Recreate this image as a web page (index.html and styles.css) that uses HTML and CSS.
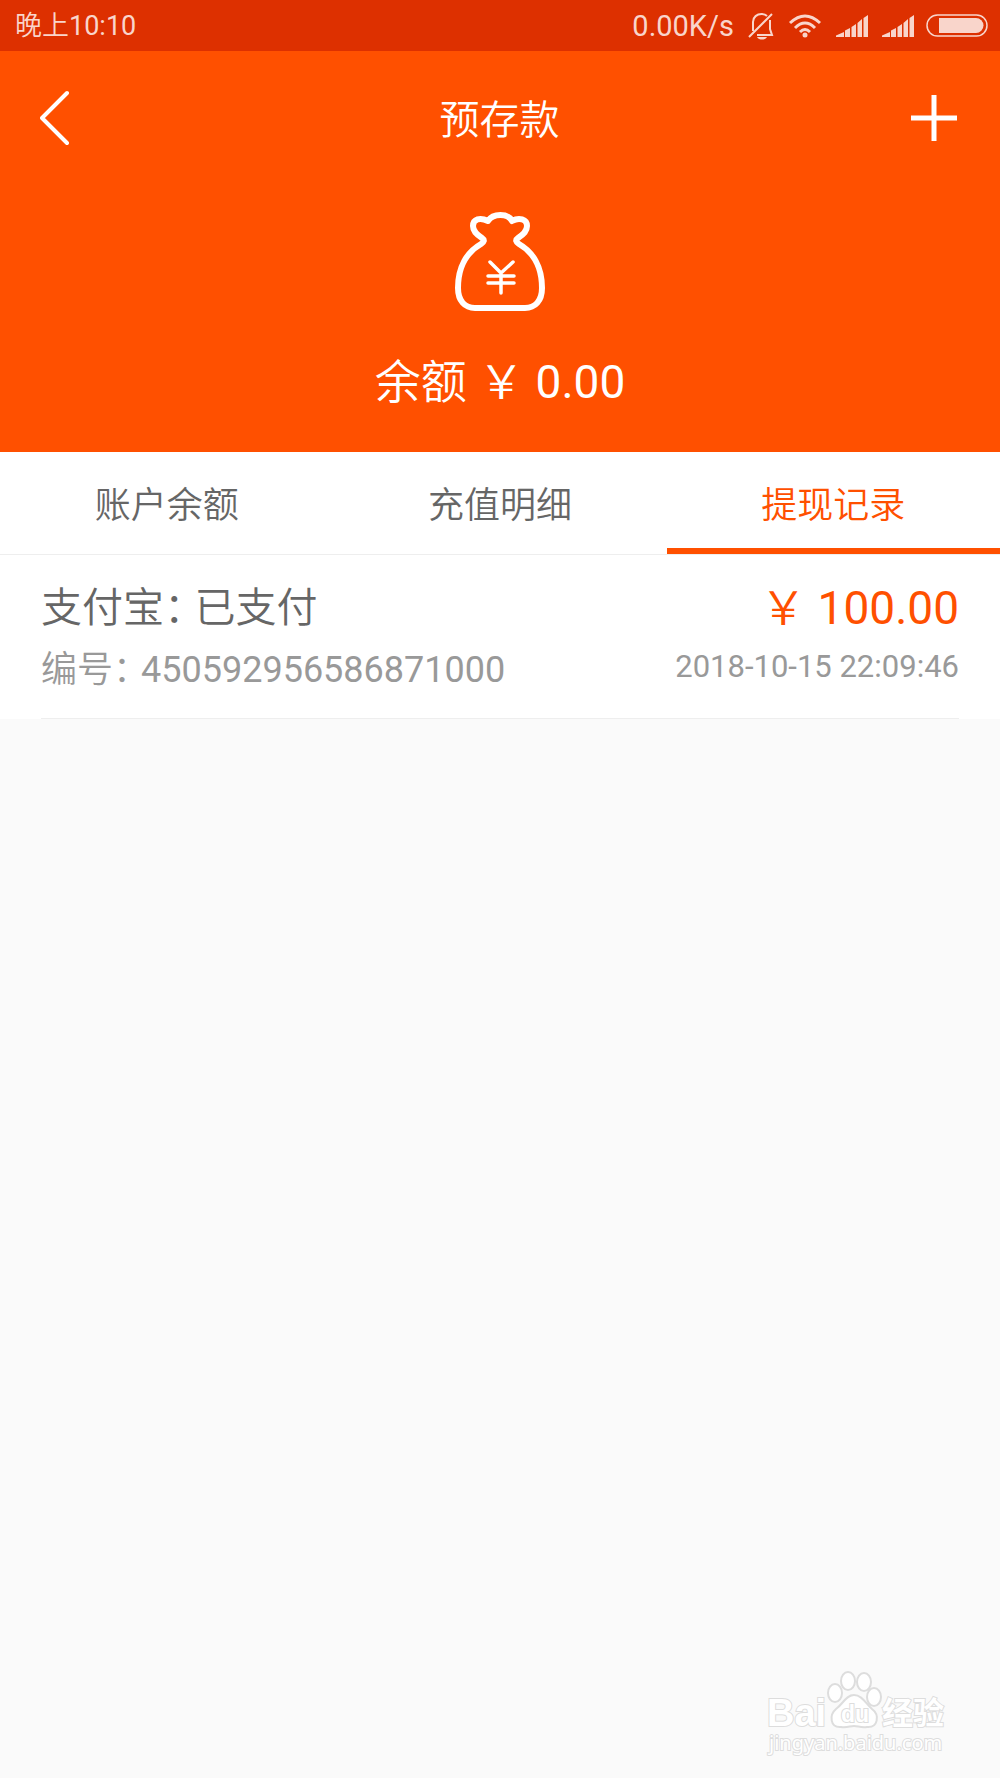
FILE: index.html
```html
<!DOCTYPE html>
<html lang="zh-CN">
<head>
  <meta charset="utf-8">
  <meta name="viewport" content="width=device-width, initial-scale=1">
  <title>预存款</title>
  <link rel="stylesheet" href="styles.css">
</head>
<body>
  <div class="status-bar">
    <time class="clock">晚上10:10</time>
    <div class="status-icons">
      <span class="rate">0.00K/s</span>
      <svg class="bell" width="26" height="28" viewBox="0 0 26 28" fill="none" stroke="currentColor" stroke-width="2">
        <path d="M1 25 24 2M5 19V10C5 5 9 2 13.500 2C16 2 18 3 19 4M22 8V17L24 23H9"/>
        <path d="M9 25H19C18 27 16 27.500 14 27.500S10 27 9 25Z" fill="currentColor" stroke="none"/>
      </svg>
      <svg class="wifi" width="34" height="24" viewBox="0 0 34 24" fill="none" stroke="currentColor" stroke-width="3">
        <path d="M2 9Q17-5 32 9M7 14Q17 4 27 14M12 18Q17 13 22 18"/>
        <circle cx="17" cy="21" r="2.500" fill="currentColor" stroke="none"/>
      </svg>
      <svg class="signal" width="32" height="22" viewBox="0 0 32 22" fill="currentColor">
        <path d="M0 22V20.500L8 17V22ZM9 22V15.500L14 13V22ZM15.500 22V12L20 9V22ZM21.500 22V8L26 4V22ZM27.500 22V3L32 0V22Z"/>
      </svg>
      <svg class="signal" width="32" height="22" viewBox="0 0 32 22" fill="currentColor">
        <path d="M0 22V20.500L8 17V22ZM9 22V15.500L14 13V22ZM15.500 22V12L20 9V22ZM21.500 22V8L26 4V22ZM27.500 22V3L32 0V22Z"/>
      </svg>
      <svg class="battery" width="62" height="24" viewBox="0 0 62 24">
        <rect x="1" y="1" width="60" height="21" rx="10.500" fill="none" stroke="currentColor" stroke-width="1.500"/>
        <path d="M13 4H50A7.500 7.500 0 0 1 50 19H13Z" fill="currentColor"/>
      </svg>
    </div>
  </div>

  <header class="header">
    <nav class="nav-bar">
      <button class="icon-button" type="button" aria-label="返回">
        <svg width="30" height="56" viewBox="0 0 30 56" fill="none" stroke="currentColor" stroke-width="4" stroke-linecap="round" stroke-linejoin="round"><path d="M27 3 2 28 27 53"/></svg>
      </button>
      <h1 class="title">预存款</h1>
      <button class="icon-button" type="button" aria-label="添加">
        <svg width="46" height="46" viewBox="0 0 46 46" fill="none" stroke="currentColor" stroke-width="5"><path d="M0 23H46M23 0V46"/></svg>
      </button>
    </nav>
    <svg class="purse" width="90" height="100" viewBox="0 0 90 100" fill="none" stroke="currentColor" stroke-linecap="round" stroke-linejoin="round">
      <path stroke-width="6" d="M20 97H70C80 97 87 90 87 77C87 56 78 41 64 33C61 31 60 29 63 27C69 23 72 20 72 15C72 8 64 6 57 10C53 2 38 2 33 10C25 6 18 8 18 15C18 20 21 23 27 27C30 29 29 31 26 33C12 41 3 56 3 77C3 90 10 97 20 97Z"/>
      <path stroke-width="3.500" d="M35 51 46 62 58 51M33 65H59M33 72H59M46 63V82"/>
    </svg>
    <p class="balance">余额 ￥ 0.00</p>
  </header>

  <nav class="tabs">
    <a class="tab" href="#balance">账户余额</a>
    <a class="tab" href="#deposits">充值明细</a>
    <a class="tab tab-active" href="#withdrawals" aria-current="page">提现记录</a>
  </nav>

  <main class="records">
    <article class="record">
      <div class="line">
        <span class="method">支付宝<span class="colon">：</span>已支付</span>
        <span class="amount">￥ 100.00</span>
      </div>
      <div class="line line-detail">
        <span class="number">编号<span class="colon">：</span>450592956586871000</span>
        <time class="date">2018-10-15 22:09:46</time>
      </div>
    </article>
  </main>

  <svg class="watermark" width="190" height="96" viewBox="0 0 190 96">
    <g class="mark-shape">
      <ellipse cx="72" cy="33" rx="7" ry="9"/>
      <ellipse cx="85" cy="21" rx="7" ry="9"/>
      <ellipse cx="101" cy="22" rx="7" ry="9"/>
      <ellipse cx="111" cy="37" rx="7" ry="9"/>
      <path d="M91 35C99 35 103 44 109 49C117 55 115 68 104 67C98 68 95 66 91 66C87 66 84 68 78 67C67 68 66 55 73 49C80 44 83 35 91 35Z"/>
    </g>
    <text class="mark-latin" x="4" y="66">Bai</text>
    <text class="mark-du" x="78" y="62">du</text>
    <text class="mark-han" x="119" y="64">经验</text>
    <text class="mark-url" x="6" y="90">jingyan.baidu.com</text>
  </svg>
</body>
</html>
```
FILE: styles.css
```css
* {
  box-sizing: border-box;
}

body {
  position: relative;
  min-height: 100vh;
  margin: 0;
  background: #fafafa;
  color: #666;
  font-family: Roboto, "Noto Sans CJK SC DemiLight", "Noto Sans CJK SC", sans-serif;
}

svg {
  display: block;
  flex: none;
}

.status-bar {
  display: flex;
  align-items: center;
  justify-content: space-between;
  height: 51px;
  padding: 0 12px 0 15px;
  background: #dd3000;
  color: #f9d5cb;
}

.clock {
  font-size: 27px;
  line-height: 40px;
}

.status-icons {
  display: flex;
  align-items: center;
}

.rate {
  margin-right: 14px;
  font-size: 29px;
  line-height: 40px;
}

.bell,
.wifi,
.signal {
  margin-right: 14px;
}

.signal + .battery {
  margin-left: -2px;
}

.header {
  display: flex;
  flex-direction: column;
  align-items: center;
  height: 401px;
  background: #ff5000;
  color: #fff;
}

.nav-bar {
  display: flex;
  align-items: center;
  justify-content: space-between;
  width: 100%;
  height: 134px;
  padding: 0 43px 0 40px;
}

.icon-button {
  display: flex;
  align-items: center;
  width: 46px;
  height: 56px;
  padding: 0;
  border: 0;
  background: none;
  color: inherit;
}

.title {
  margin: 0;
  padding: 6px 0 0 2px;
  font-size: 40px;
  font-weight: 350;
  line-height: 60px;
}

.purse {
  margin-top: 26px;
}

.balance {
  margin: 37px 0 0;
  font-size: 46px;
  line-height: 68px;
}

.tabs {
  display: grid;
  grid-template-columns: repeat(3, 1fr);
  border-bottom: 1px solid #eee;
  background: #fff;
}

.tab {
  height: 102px;
  padding-top: 28px;
  border-bottom: 6px solid transparent;
  color: #666;
  font-size: 36px;
  font-weight: 350;
  line-height: 52px;
  text-align: center;
  text-decoration: none;
}

.tab-active {
  border-color: #ff5000;
  color: #ff5000;
}

.records {
  padding: 0 41px;
  background: #fff;
}

.record {
  height: 164px;
  padding-top: 18px;
  border-bottom: 1px solid #eee;
}

.line {
  display: flex;
  align-items: center;
  justify-content: space-between;
  height: 62px;
}

.method {
  font-size: 41px;
  font-weight: 350;
}

.colon {
  margin-right: 10px;
  font-feature-settings: "halt";
}

.amount {
  color: #ff5000;
  font-size: 46px;
}

.line-detail {
  color: #999;
}

.number {
  font-size: 36px;
}

.date {
  font-size: 31px;
}

.watermark {
  position: absolute;
  right: 47px;
  bottom: 22px;
  fill: #fff;
  stroke: #ddd;
  stroke-width: 2px;
}

.watermark text {
  paint-order: stroke;
}

.mark-latin {
  font: bold 38px "Liberation Sans", sans-serif;
}

.mark-du {
  font: bold 23px "Liberation Sans", sans-serif;
}

.mark-han {
  font: bold 31px "Noto Sans CJK SC", sans-serif;
}

.mark-url {
  font: 20px "Noto Sans", sans-serif;
}
```
